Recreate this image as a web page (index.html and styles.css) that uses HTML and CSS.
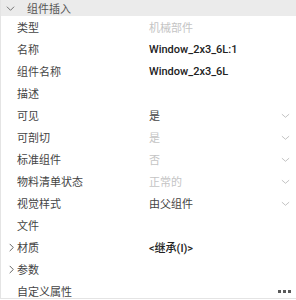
FILE: index.html
```html
<!DOCTYPE html>
<html lang="zh-CN">
<head>
    <meta charset="UTF-8" />
    <title>组件插入</title>
    <link rel="stylesheet" href="styles.css">
</head>
<body>

<div class="panel">
    <div class="panel-head">
        <svg class="caret" viewBox="0 0 10 10"><path d="M1 3 L5 7 L9 3" /></svg>
        <span>组件插入</span>
    </div>

    <div class="row">
        <span class="label">类型</span>
        <span class="value muted">机械部件</span>
    </div>
    <div class="row">
        <span class="label">名称</span>
        <span class="value strong">Window_2x3_6L:1</span>
    </div>
    <div class="row">
        <span class="label">组件名称</span>
        <span class="value strong">Window_2x3_6L</span>
    </div>
    <div class="row">
        <span class="label">描述</span>
        <span class="value"></span>
    </div>
    <div class="row">
        <span class="label">可见</span>
        <span class="value">是</span>
        <svg class="drop" viewBox="0 0 10 10"><path d="M1 3.5 L5 7 L9 3.5" /></svg>
    </div>
    <div class="row">
        <span class="label">可剖切</span>
        <span class="value muted">是</span>
        <svg class="drop" viewBox="0 0 10 10"><path d="M1 3.5 L5 7 L9 3.5" /></svg>
    </div>
    <div class="row">
        <span class="label">标准组件</span>
        <span class="value muted">否</span>
        <svg class="drop" viewBox="0 0 10 10"><path d="M1 3.5 L5 7 L9 3.5" /></svg>
    </div>
    <div class="row">
        <span class="label">物料清单状态</span>
        <span class="value muted">正常的</span>
        <svg class="drop" viewBox="0 0 10 10"><path d="M1 3.5 L5 7 L9 3.5" /></svg>
    </div>
    <div class="row">
        <span class="label">视觉样式</span>
        <span class="value">由父组件</span>
        <svg class="drop" viewBox="0 0 10 10"><path d="M1 3.5 L5 7 L9 3.5" /></svg>
    </div>
    <div class="row">
        <span class="label">文件</span>
        <span class="value"></span>
    </div>
    <div class="row">
        <svg class="expand" viewBox="0 0 10 10"><path d="M3 1 L7 5 L3 9" /></svg>
        <span class="label">材质</span>
        <span class="value strong">&lt;继承(I)&gt;</span>
    </div>
    <div class="row">
        <svg class="expand" viewBox="0 0 10 10"><path d="M3 1 L7 5 L3 9" /></svg>
        <span class="label">参数</span>
        <span class="value"></span>
    </div>
    <div class="row">
        <span class="label">自定义属性</span>
        <span class="value"></span>
        <svg class="dots" viewBox="0 0 13 3">
            <rect x="0" y="0" width="3" height="3" />
            <rect x="5" y="0" width="3" height="3" />
            <rect x="10" y="0" width="3" height="3" />
        </svg>
    </div>
</div>

</body>
</html>
```

FILE: styles.css
```css
* {
    box-sizing: border-box;
    margin: 0;
    padding: 0;
}
body {
    background: #ffffff;
    font-family: Roboto, "Noto Sans CJK SC", sans-serif;
    font-size: 11px;
    color: #333333;
}
.panel {
    width: 296px;
    height: 299px;
    border-left: 1px solid #e4e4e4;
    border-bottom: 1px solid #e4e4e4;
}
.panel-head {
    display: flex;
    align-items: center;
    height: 16px;
    background: #ebebeb;
    color: #555555;
}
.panel-head span {
    margin-left: 12px;
}
.caret {
    width: 9px;
    height: 9px;
    margin-left: 5px;
    fill: none;
    stroke: #666666;
    stroke-width: 1;
}
.row {
    position: relative;
    display: flex;
    align-items: center;
    height: 22px;
    padding-left: 16px;
}
.label {
    width: 132px;
    color: #444444;
}
.value {
    flex: 1;
    color: #444444;
}
.value.strong {
    color: #222222;
    font-weight: 500;
}
.value.muted {
    color: #c4c4c4;
}
.drop {
    width: 9px;
    height: 9px;
    margin-right: 6px;
    fill: none;
    stroke: #bdbdbd;
    stroke-width: 1;
}
.expand {
    position: absolute;
    left: 6px;
    width: 9px;
    height: 9px;
    fill: none;
    stroke: #555555;
    stroke-width: 1;
}
.dots {
    width: 13px;
    height: 3px;
    margin-right: 5px;
    fill: #5a5a5a;
}
```
